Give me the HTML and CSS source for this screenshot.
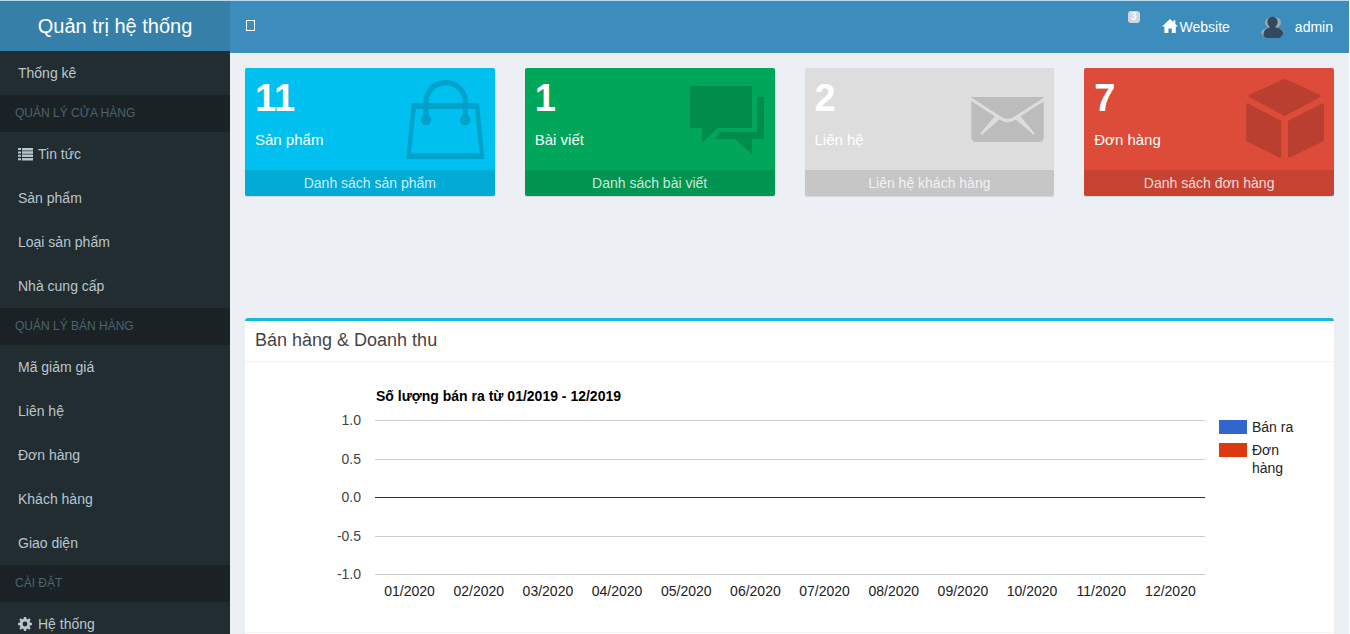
FILE: index.html
```html
<!DOCTYPE html>
<html lang="vi">
<head>
<meta charset="utf-8">
<title>Quản trị hệ thống</title>
<link rel="stylesheet" href="styles.css">
</head>
<body>
<div class="app">
  <aside class="sidebar">
    <a class="logo" href="#">Quản trị hệ thống</a>
    <nav class="menu">
      <a class="menu-link" href="#">Thống kê</a>
      <h2 class="menu-header">QUẢN LÝ CỬA HÀNG</h2>
      <a class="menu-link" href="#"><svg class="menu-icon" viewBox="0 0 15 14" aria-hidden="true"><path d="M0 1h3v2H0zM4 1h11v2.400H4zM0 4.500h3v2H0zM4 4.300h11v2.400H4zM0 7.800h3v2H0zM4 7.600h11V10H4zM0 11.200h3v2H0zM4 11h11v2.400H4z"/></svg>Tin tức</a>
      <a class="menu-link" href="#">Sản phẩm</a>
      <a class="menu-link" href="#">Loại sản phẩm</a>
      <a class="menu-link" href="#">Nhà cung cấp</a>
      <h2 class="menu-header">QUẢN LÝ BÁN HÀNG</h2>
      <a class="menu-link" href="#">Mã giảm giá</a>
      <a class="menu-link" href="#">Liên hệ</a>
      <a class="menu-link" href="#">Đơn hàng</a>
      <a class="menu-link" href="#">Khách hàng</a>
      <a class="menu-link" href="#">Giao diện</a>
      <h2 class="menu-header">CÀI ĐẶT</h2>
      <a class="menu-link" href="#"><svg class="menu-icon" viewBox="0 0 15 14" aria-hidden="true"><path fill-rule="evenodd" d="M5.900 0h2.200l.4 1.900 1.100.5L11.200 1.300l1.500 1.500-1.100 1.600.5 1.100 1.900.4v2.200l-1.900.4-.5 1.100 1.100 1.600-1.500 1.500-1.600-1.100-1.100.5L8.100 14H5.900l-.4-1.900-1.100-.5-1.600 1.100-1.500-1.500 1.100-1.600-.5-1.100L0 8.100V5.900l1.900-.4.5-1.100-1.100-1.600 1.500-1.500 1.600 1.100 1.100-.5zM7 4.600a2.400 2.400 0 1 0 0 4.800 2.400 2.400 0 0 0 0-4.800z"/></svg>Hệ thống</a>
    </nav>
  </aside>

  <div class="main">
    <header class="navbar">
      <button class="toggle" type="button" aria-label="Menu"><span class="toggle-box"></span></button>
      <div class="nav-right">
        <span class="badge">3</span>
        <a class="nav-link" href="#"><svg class="home-icon" viewBox="0 0 16 14" aria-hidden="true"><path d="M8 0l3.500 3.300V1.200h1.800v3.800L16 7.600h-2.200V14H9.800V9.500H6.400V14H2.400V7.600H0z"/></svg>Website</a>
        <a class="nav-link user" href="#"><svg class="avatar" viewBox="0 0 25 25" aria-hidden="true"><g fill="#9aa9b1"><circle cx="10" cy="7.500" r="5"/><path d="M8 11h5v11H3q-2-1-2-3c0-3 2-5 6-6z"/><circle cx="16" cy="7.500" r="5"/><path d="M14 11h4v2c4 1 6 3 6 5.500L20 20z"/></g><circle cx="12.500" cy="7" r="5.200" fill="#34495e"/><path d="M9.500 9h6v3.500c5 .5 8.300 3.500 8.300 7 0 2-1 3.500-3.300 3.500H6.800c-2.300 0-3.300-1.500-3.300-3.500 0-3.500 2-6 6-7z" fill="#34495e"/></svg>admin</a>
      </div>
    </header>

    <main class="content">
      <section class="cards">
        <article class="card aqua">
          <div class="card-top">
            <div class="card-text"><h3 class="count">11</h3><p class="label">Sản phẩm</p></div>
            <svg class="card-icon" viewBox="480 24 285 300" aria-hidden="true"><g opacity=".15"><path fill-rule="evenodd" d="M515 129H717L733 297H499zM527 147L513 280H719L705 147z"/><path d="M558 180V126a59 58 0 0 1 118 0V180" fill="none" stroke="#000" stroke-width="16"/><circle cx="558" cy="180" r="16"/><circle cx="676" cy="180" r="16"/></g></svg>
          </div>
          <a class="card-footer" href="#">Danh sách sản phẩm</a>
        </article>
        <article class="card green">
          <div class="card-top">
            <div class="card-text"><h3 class="count">1</h3><p class="label">Bài viết</p></div>
            <svg class="card-icon" viewBox="480 24 285 300" aria-hidden="true"><path opacity=".15" d="M510 78H696V204H594L546 248V204H510zM711 112H732V237H696V283L646 237H582L604 216H711z"/></svg>
          </div>
          <a class="card-footer" href="#">Danh sách bài viết</a>
        </article>
        <article class="card gray">
          <div class="card-top">
            <div class="card-text"><h3 class="count">2</h3><p class="label">Liên hệ</p></div>
            <svg class="card-icon" viewBox="478 24 285 300" aria-hidden="true"><path d="M515 111H732V232q0 14-14 14H529q-14 0-14-14z" fill="#bcbcbc"/><path d="M510 115L596 170Q624 194 652 170L738 115" fill="none" stroke="#ddd" stroke-width="9"/><path d="M586 168L600 178 546 225 542 220zM662 168L648 178 702 225 706 221z" fill="#ddd"/></svg>
          </div>
          <a class="card-footer" href="#">Liên hệ khách hàng</a>
        </article>
        <article class="card red">
          <div class="card-top">
            <div class="card-text"><h3 class="count">7</h3><p class="label">Đơn hàng</p></div>
            <svg class="card-icon" viewBox="507 24 285 300" aria-hidden="true"><g opacity=".15" stroke="#000" stroke-width="8" stroke-linejoin="round"><path d="M540 108L644 61 748 108 644 164zM532 134L630 185V289L532 240zM658 185L758 134V240L658 289z"/></g></svg>
          </div>
          <a class="card-footer" href="#">Danh sách đơn hàng</a>
        </article>
      </section>

      <section class="panel">
        <h2 class="panel-title">Bán hàng &amp; Doanh thu</h2>
        <div class="chart">
          <h3 class="chart-title">Số lượng bán ra từ 01/2019 - 12/2019</h3>
          <div class="y-axis"><span>1.0</span><span>0.5</span><span>0.0</span><span>-0.5</span><span>-1.0</span></div>
          <div class="plot"><i class="line"></i><i class="line"></i><i class="line zero"></i><i class="line"></i><i class="line"></i></div>
          <ul class="legend">
            <li class="legend-item"><i class="swatch blue"></i><span class="legend-text">Bán ra</span></li>
            <li class="legend-item"><i class="swatch orange"></i><span class="legend-text">Đơn hàng</span></li>
          </ul>
          <div class="x-axis"><span>01/2020</span><span>02/2020</span><span>03/2020</span><span>04/2020</span><span>05/2020</span><span>06/2020</span><span>07/2020</span><span>08/2020</span><span>09/2020</span><span>10/2020</span><span>11/2020</span><span>12/2020</span></div>
        </div>
        <div class="panel-footer"></div>
      </section>
    </main>
  </div>
</div>
</body>
</html>
```

FILE: styles.css
```css
* { box-sizing: border-box; }

body {
  margin: 0;
  font-family: "Liberation Sans", Arial, sans-serif;
  font-size: 14px;
  line-height: 20px;
  color: #333;
  background: #fff;
}

a { color: inherit; text-decoration: none; }
h2, h3, p, ul { margin: 0; padding: 0; }

.app {
  display: flex;
  height: 100vh;
  overflow: hidden;
  padding-right: 1px;
  border-top: 1px solid #b9d9ec;
}

.sidebar { flex: 0 0 230px; background: #222d32; color: #b8c7ce; }
.logo {
  display: block;
  height: 50px;
  line-height: 50px;
  font-size: 20px;
  text-align: center;
  color: #fff;
  background: #367fa9;
}
.menu-link { display: flex; align-items: center; padding: 12px 15px 12px 18px; }
.menu-icon { width: 15px; height: 14px; margin-right: 5px; fill: currentColor; }
.menu-header {
  padding: 10px 15px;
  font-size: 12px;
  font-weight: 400;
  line-height: 17px;
  color: #4b646f;
  background: #1a2226;
}

.main { flex: 1; min-width: 0; background: #ecf0f5; }
.navbar {
  display: flex;
  justify-content: space-between;
  height: 52px;
  color: #fff;
  background: #3c8dbc;
}
.toggle { padding: 0 16px; border: 0; background: none; display: flex; align-items: center; }
.toggle-box { width: 9px; height: 11px; margin-bottom: 4px; border: 1px solid #fff; }
.nav-right { display: flex; align-items: center; padding-right: 16px; }
.badge {
  align-self: flex-start;
  margin: 10px 22px 0 0;
  padding: 0 3px;
  border-radius: 3px;
  font-size: 10px;
  font-weight: 700;
  line-height: 12px;
  background: #d2d6de;
}
.nav-link { display: flex; align-items: center; }
.home-icon { width: 16px; height: 14px; margin: 0 2px 2px 0; fill: #fff; }
.user { margin-left: 30px; }
.avatar { width: 25px; height: 25px; margin-right: 10px; border-radius: 50%; }

.content { padding: 15px; }
.cards { display: grid; grid-template-columns: repeat(4, 1fr); gap: 30px; margin-bottom: 122px; }
.card { border-radius: 2px; overflow: hidden; color: #fff; box-shadow: 0 1px 1px rgba(0, 0, 0, .1); }
.aqua { background: #00c0ef; }
.green { background: #00a65a; }
.gray { background: #ddd; }
.red { background: #dd4b39; }
.card-top { display: flex; justify-content: space-between; height: 102px; }
.card-text { padding: 9px 10px; }
.count { margin-bottom: 11px; font-size: 38px; line-height: 42px; }
.label { font-size: 15px; line-height: 20px; }
.card-icon { width: 95px; height: 100px; }
.card-footer {
  display: block;
  padding: 3px 0;
  text-align: center;
  color: rgba(255, 255, 255, .8);
  background: rgba(0, 0, 0, .1);
}

.panel {
  border-top: 3px solid #14b9dc;
  border-radius: 3px;
  background: #fff;
  box-shadow: 0 1px 1px rgba(0, 0, 0, .1);
}
.panel-title {
  padding: 10px 10px 12px;
  border-bottom: 1px solid #f4f4f4;
  font-size: 18px;
  font-weight: 400;
  line-height: 18px;
  color: #444;
}
.chart {
  display: grid;
  grid-template-columns: 130px 1fr 129px;
  padding: 24px 0 33px;
}
.chart-title {
  grid-column: 2;
  padding-left: 1px;
  margin-bottom: 6px;
  font-size: 14px;
  line-height: 20px;
  color: #000;
}
.y-axis {
  grid-column: 1;
  display: flex;
  flex-direction: column;
  justify-content: space-between;
  padding-right: 14px;
  line-height: 17px;
  text-align: right;
  color: #444;
}
.plot {
  display: flex;
  flex-direction: column;
  justify-content: space-between;
  height: 155px;
  margin: 8px 0;
}
.line { height: 1px; background: #ccc; }
.zero { background: #333; }
.legend { list-style: none; padding: 8px 36px 0 14px; line-height: 18px; color: #222; }
.legend-item { display: flex; margin-bottom: 7px; }
.swatch { flex: 0 0 28px; height: 14px; margin-right: 5px; }
.blue { background: #36c; }
.orange { background: #dc3912; }
.legend-text { margin-top: -2px; }
.x-axis {
  grid-column: 2;
  display: grid;
  grid-template-columns: repeat(12, 1fr);
  line-height: 16px;
  text-align: center;
  color: #222;
}
.panel-footer { height: 40px; border-top: 1px solid #f4f4f4; }
```
